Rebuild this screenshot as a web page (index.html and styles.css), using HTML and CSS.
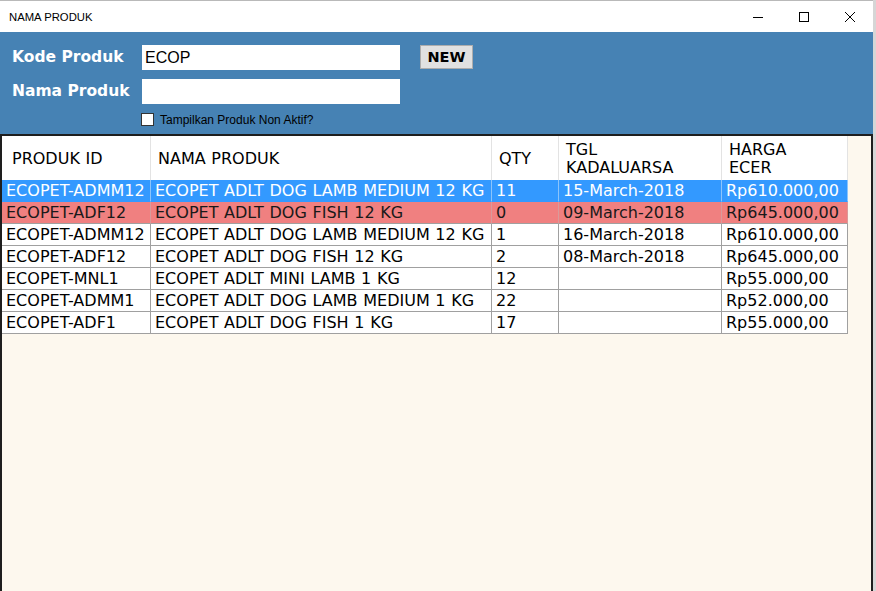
FILE: index.html
```html
<!DOCTYPE html>
<html>
<head>
<meta charset="utf-8">
<link rel="stylesheet" href="styles.css">
</head>
<body>
<div class="window">
  <div class="titlebar">
    <span class="title">NAMA PRODUK</span>
    <div class="controls">
      <span class="ctl"><svg width="12" height="12" viewBox="0 0 12 12"><path d="M1 6.5H11" stroke="#000" stroke-width="1"/></svg></span>
      <span class="ctl"><svg width="12" height="12" viewBox="0 0 12 12"><rect x="1.5" y="1.5" width="9" height="9" fill="none" stroke="#000" stroke-width="1"/></svg></span>
      <span class="ctl"><svg width="12" height="12" viewBox="0 0 12 12"><path d="M1 1L11 11M11 1L1 11" stroke="#000" stroke-width="1"/></svg></span>
    </div>
  </div>
  <div class="panel">
    <label class="lbl">Kode Produk</label>
    <div class="input">ECOP</div>
    <button class="btn">NEW</button>
    <label class="lbl">Nama Produk</label>
    <div class="input"></div>
    <span></span>
    <span></span>
    <div class="check"><span class="box"></span><span>Tampilkan Produk Non Aktif?</span></div>
  </div>
  <div class="gridarea">
    <div class="grid">
      <div class="hd first">PRODUK ID</div>
      <div class="hd">NAMA PRODUK</div>
      <div class="hd">QTY</div>
      <div class="hd">TGL<br>KADALUARSA</div>
      <div class="hd">HARGA<br>ECER</div>

      <div class="c sel">ECOPET-ADMM12</div><div class="c sel">ECOPET ADLT DOG LAMB MEDIUM 12 KG</div><div class="c sel">11</div><div class="c sel">15-March-2018</div><div class="c sel">Rp610.000,00</div>
      <div class="c red">ECOPET-ADF12</div><div class="c red">ECOPET ADLT DOG FISH 12 KG</div><div class="c red">0</div><div class="c red">09-March-2018</div><div class="c red">Rp645.000,00</div>
      <div class="c">ECOPET-ADMM12</div><div class="c">ECOPET ADLT DOG LAMB MEDIUM 12 KG</div><div class="c">1</div><div class="c">16-March-2018</div><div class="c">Rp610.000,00</div>
      <div class="c">ECOPET-ADF12</div><div class="c">ECOPET ADLT DOG FISH 12 KG</div><div class="c">2</div><div class="c">08-March-2018</div><div class="c">Rp645.000,00</div>
      <div class="c">ECOPET-MNL1</div><div class="c">ECOPET ADLT MINI LAMB 1 KG</div><div class="c">12</div><div class="c"></div><div class="c">Rp55.000,00</div>
      <div class="c">ECOPET-ADMM1</div><div class="c">ECOPET ADLT DOG LAMB MEDIUM 1 KG</div><div class="c">22</div><div class="c"></div><div class="c">Rp52.000,00</div>
      <div class="c">ECOPET-ADF1</div><div class="c">ECOPET ADLT DOG FISH 1 KG</div><div class="c">17</div><div class="c"></div><div class="c">Rp55.000,00</div>
    </div>
  </div>
</div>
</body>
</html>
```
FILE: styles.css
```css
html, body {
  margin: 0;
  padding: 0;
  background: #ffffff;
}
.window {
  width: 876px;
  height: 591px;
  box-sizing: border-box;
  border-right: 3px solid #d6d6d6;
  display: flex;
  flex-direction: column;
  overflow: hidden;
}
.titlebar {
  height: 32px;
  flex: none;
  box-sizing: border-box;
  border-top: 1px solid #b9b9b9;
  background: #ffffff;
  display: flex;
  align-items: center;
  padding-left: 9px;
}
.title {
  font-family: "Liberation Sans", Arial, sans-serif;
  font-size: 11.3px;
  color: #000;
  flex: 1;
  margin-top: 1px;
}
.controls {
  display: flex;
}
.ctl {
  width: 46px;
  height: 31px;
  display: flex;
  align-items: center;
  justify-content: center;
}
.panel {
  height: 102px;
  flex: none;
  box-sizing: border-box;
  background: #4682b4;
  padding: 13px 0 0 12px;
  display: grid;
  grid-template-columns: 130px 278px 53px;
  grid-template-rows: 25px 25px 13px;
  row-gap: 9px;
  align-items: center;
}
.panel > :nth-child(n+7) {
  margin-top: -1px;
}
.lbl {
  font-family: "DejaVu Sans", Verdana, sans-serif;
  font-weight: bold;
  font-size: 15.5px;
  color: #ffffff;
  white-space: nowrap;
  margin-top: -1px;
}
.input {
  width: 258px;
  box-sizing: border-box;
  height: 25px;
  background: #ffffff;
  font-family: "Liberation Sans", Arial, sans-serif;
  font-size: 16px;
  line-height: 25px;
  padding-left: 3px;
  color: #000;
}
.btn {
  width: 53px;
  height: 24px;
  margin: 0;
  padding: 0;
  border: 1px solid #adadad;
  background: #e1e1e1;
  font-family: "DejaVu Sans", Verdana, sans-serif;
  font-weight: bold;
  font-size: 14.5px;
  color: #000;
  align-self: start;
}
.check {
  display: flex;
  align-items: center;
  gap: 6px;
  margin-left: -1px;
  font-family: "Liberation Sans", Arial, sans-serif;
  font-size: 12px;
  color: #000;
  white-space: nowrap;
}
.check span:last-child {
  margin-top: 1px;
}
.box {
  width: 11px;
  height: 11px;
  border: 1px solid #333;
  background: #fff;
  flex: none;
}
.gridarea {
  flex: 1;
  background: #fdf8ee;
  border-top: 2px solid #1e1e1e;
  border-left: 2px solid #1e1e1e;
  border-right: 2px solid #1e1e1e;
}
.grid {
  display: grid;
  grid-template-columns: 149px 341px 67px 163px 126px;
  grid-auto-rows: 22px;
  grid-template-rows: 44px;
  width: max-content;
  font-family: "DejaVu Sans", Verdana, sans-serif;
  font-size: 16px;
  word-spacing: 0.6px;
  color: #000;
}
.hd {
  background: #ffffff;
  border-right: 1px solid #e3e3e3;
  display: flex;
  align-items: center;
  padding-left: 7px;
  padding-top: 2px;
  line-height: 18px;
  white-space: nowrap;
}
.hd.first {
  padding-left: 10px;
}
.c {
  background: #ffffff;
  border-right: 1px solid #a0a0a0;
  border-bottom: 1px solid #a0a0a0;
  padding-left: 4px;
  padding-top: 1px;
  line-height: 20px;
  white-space: nowrap;
  overflow: hidden;
}
.c.sel {
  background: #3399ff;
  color: #ffffff;
  border-bottom-color: #3399ff;
  border-right-color: #8cc4fb;
}
.c.red {
  background: #f08080;
  color: #1a1a1a;
  border-right-color: #d99a9a;
}
```
